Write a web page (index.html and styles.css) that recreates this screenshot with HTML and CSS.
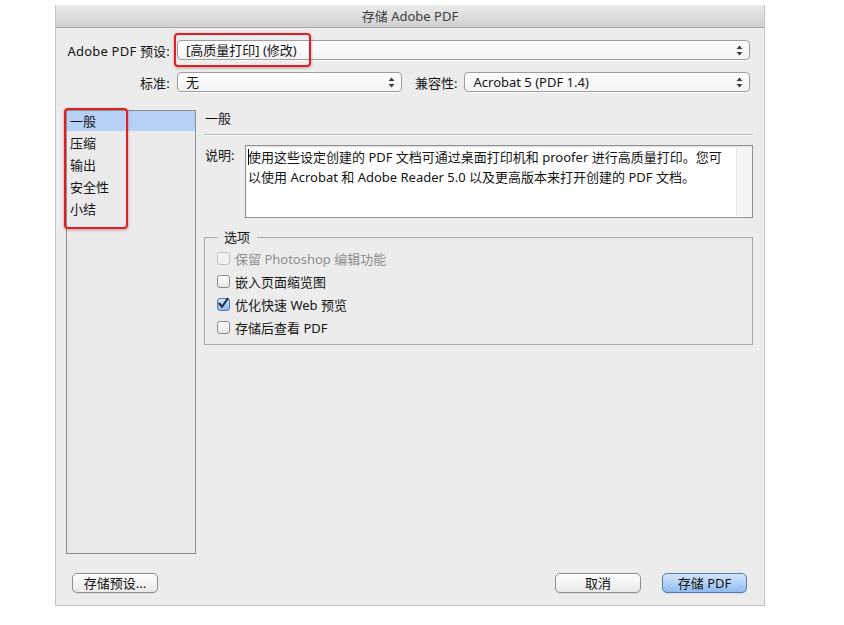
FILE: index.html
```html
<!DOCTYPE html>
<html lang="zh-CN">

<head>
    <meta charset="UTF-8">
    <meta name="viewport" content="width=device-width, initial-scale=1.0">
    <title>存储 Adobe PDF</title>
    <link rel="stylesheet" href="styles.css">
</head>

<body>
    <div class="dialog">
        <div class="titlebar">存储 Adobe PDF</div>

        <div class="inner">
            <div class="row row-preset">
                <span class="label">Adobe PDF 预设:</span>
                <div class="select select-wide">
                    <span>[高质量打印] (修改)</span>
                    <svg class="arrows" width="7" height="11" viewBox="0 0 7 11">
                        <path d="M3.5 0.5 L6.5 4 L0.5 4 Z M3.5 10.5 L6.5 7 L0.5 7 Z" fill="#3a3a3a" />
                    </svg>
                </div>
            </div>

            <div class="row row-standard">
                <span class="label">标准:</span>
                <div class="select select-std">
                    <span>无</span>
                    <svg class="arrows" width="7" height="11" viewBox="0 0 7 11">
                        <path d="M3.5 0.5 L6.5 4 L0.5 4 Z M3.5 10.5 L6.5 7 L0.5 7 Z" fill="#3a3a3a" />
                    </svg>
                </div>
                <span class="label-compat">兼容性:</span>
                <div class="select select-wide">
                    <span>Acrobat 5 (PDF 1.4)</span>
                    <svg class="arrows" width="7" height="11" viewBox="0 0 7 11">
                        <path d="M3.5 0.5 L6.5 4 L0.5 4 Z M3.5 10.5 L6.5 7 L0.5 7 Z" fill="#3a3a3a" />
                    </svg>
                </div>
            </div>

            <div class="main">
                <ul class="nav">
                    <li class="active">一般</li>
                    <li>压缩</li>
                    <li>输出</li>
                    <li>安全性</li>
                    <li>小结</li>
                </ul>

                <div class="panel">
                    <div class="panel-title">一般</div>

                    <div class="desc">
                        <span class="desc-label">说明:</span>
                        <div class="desc-box">
                            <div class="desc-text"><span class="caret"></span>使用这些设定创建的 PDF 文档可通过桌面打印机和 proofer 进行高质量打印。您可<br>以使用 Acrobat 和 Adobe Reader 5.0 以及更高版本来打开创建的 PDF 文档。</div>
                            <div class="scrollbar"></div>
                        </div>
                    </div>

                    <fieldset class="options">
                        <legend>选项</legend>
                        <div class="check disabled"><span class="box"></span>保留 Photoshop 编辑功能</div>
                        <div class="check"><span class="box"></span>嵌入页面缩览图</div>
                        <div class="check"><span class="box checked">
                                <svg width="13" height="13" viewBox="0 0 13 13">
                                    <path d="M2.5 6.5 L5.5 10 L11.5 1.5" fill="none" stroke="#1d2a4a" stroke-width="2.2" stroke-linecap="round" stroke-linejoin="round" />
                                </svg>
                            </span>优化快速 Web 预览</div>
                        <div class="check"><span class="box"></span>存储后查看 PDF</div>
                    </fieldset>
                </div>
            </div>

            <div class="buttons">
                <button class="btn">存储预设...</button>
                <div class="spacer"></div>
                <button class="btn">取消</button>
                <button class="btn btn-default">存储 PDF</button>
            </div>
        </div>

        <!-- 红色标注框 -->
        <div class="mark mark-preset"></div>
        <div class="mark mark-nav"></div>
    </div>
</body>

</html>
```

FILE: styles.css
```css
* {
    margin: 0;
    padding: 0;
    box-sizing: border-box;
    list-style: none;
}

body {
    background: #fff;
    font-family: "Noto Sans", "Noto Sans CJK SC", sans-serif;
    font-size: 13px;
    color: #151515;
}

.dialog {
    position: relative;
    width: 710px;
    height: 601px;
    margin: 5px 0 0 55px;
    background: #ececec;
    border: 1px solid #c4c4c4;
    border-top: none;
}

.titlebar {
    height: 23px;
    line-height: 22px;
    text-align: center;
    color: #3f3f3f;
    background: linear-gradient(#ebebeb, #d0d0d0);
    border-bottom: 1px solid #a9a9a9;
}

.inner {
    padding: 0 11px 0 10px;
}

.row {
    display: flex;
    align-items: center;
    height: 20px;
    padding-right: 3px;
}

.row-preset {
    margin-top: 12px;
}

.row-standard {
    margin-top: 12px;
}

.label {
    width: 104px;
    text-align: right;
    margin-right: 7px;
    white-space: nowrap;
    letter-spacing: 0.2px;
}

.label-compat {
    margin: 0 7px 0 13px;
    white-space: nowrap;
}

.select {
    height: 20px;
    display: flex;
    align-items: center;
    justify-content: space-between;
    padding: 0 6px 0 8px;
    border: 1px solid #9d9d9d;
    border-radius: 4px;
    background: linear-gradient(#ffffff, #f3f3f3);
    box-shadow: 0 1px 0 rgba(255, 255, 255, 0.7);
    line-height: 18px;
}

.select-wide {
    flex: 1;
}

.select-std {
    width: 225px;
}

.main {
    display: flex;
    margin-top: 18px;
}

.nav {
    width: 130px;
    height: 444px;
    border: 1px solid #8d8d8d;
    background: #eaeaea;
}

.nav li {
    height: 22px;
    line-height: 20px;
    padding-left: 3px;
}

.nav li.active {
    height: 20px;
    margin-bottom: 2px;
    background: #b6d0f6;
}

.panel {
    flex: 1;
    margin-left: 8px;
}

.panel-title {
    height: 25px;
    line-height: 16px;
    padding-left: 1px;
    border-bottom: 1px solid #bdbdbd;
    box-shadow: 0 1px 0 #f8f8f8;
}

.desc {
    display: flex;
    margin-top: 10px;
}

.desc-label {
    width: 41px;
    padding: 2px 0 0 1px;
    line-height: 16px;
}

.desc-box {
    flex: 1;
    height: 73px;
    display: flex;
    background: #fff;
    border: 1px solid #8f8f8f;
    box-shadow: inset 0 1px 2px rgba(0, 0, 0, 0.15);
}

.desc-text {
    flex: 1;
    padding: 1px 0 0 2px;
    line-height: 20px;
    white-space: nowrap;
}

.caret {
    display: inline-block;
    width: 1px;
    height: 16px;
    margin-right: -1px;
    vertical-align: -3px;
    background: #000;
}

.scrollbar {
    width: 15px;
    margin: 1px 1px 1px 0;
    background: #f4f4f4;
    border-left: 1px solid #e8e8e8;
}

.options {
    margin-top: 11px;
    padding: 0 12px 5px 12px;
    border: 1px solid #a8a8a8;
    min-width: 0;
}

.options legend {
    padding: 0 7px;
    line-height: 16px;
}

.check {
    display: flex;
    align-items: center;
    height: 23px;
}

.check:first-of-type {
    margin-top: 2px;
}

.check .box {
    width: 13px;
    height: 13px;
    margin-right: 5px;
    border: 1px solid #8b8b8b;
    border-radius: 3px;
    background: linear-gradient(#ffffff, #e6e6e6);
    display: flex;
}

.check.disabled {
    color: #8e8e8e;
}

.check.disabled .box {
    border-color: #c2c2c2;
    background: #f1f1f1;
}

.check .box.checked {
    border-color: #5577a8;
    background: linear-gradient(#d4e6fb, #8db7ea);
}

.check .box.checked svg {
    margin: -2px 0 0 -1px;
}

.buttons {
    display: flex;
    margin-top: 19px;
    padding: 0 6px;
}

.spacer {
    flex: 1;
}

.btn {
    width: 86px;
    height: 20px;
    font: inherit;
    color: #111;
    line-height: 18px;
    border: 1px solid #8f8f8f;
    border-radius: 5px;
    background: linear-gradient(#ffffff, #e8e8e8);
    box-shadow: 0 1px 1px rgba(0, 0, 0, 0.08);
}

.btn + .btn {
    margin-left: 21px;
}

.btn-default {
    width: 85px;
    border-color: #5a7bab;
    background: linear-gradient(#d2e5fc, #90bcef);
}

.mark {
    position: absolute;
    border: 2px solid #df1f28;
    border-radius: 4px;
    box-shadow: 0 1px 3px rgba(120, 0, 0, 0.35);
}

.mark-preset {
    left: 118px;
    top: 28px;
    width: 137px;
    height: 34px;
}

.mark-nav {
    left: 8px;
    top: 103px;
    width: 64px;
    height: 121px;
}
```
